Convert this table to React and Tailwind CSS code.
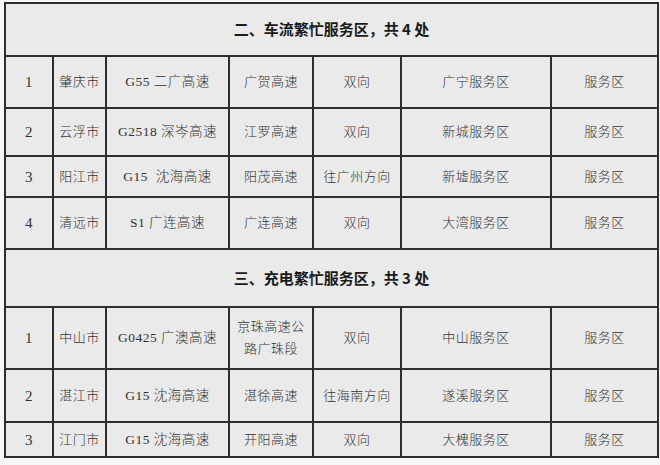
import React from 'react';

const sections = [
  {
    title: '二、车流繁忙服务区，共 4 处',
    h: 'h-[53px]',
    rows: [
      { h: 'h-[52px]', cells: ['1', '肇庆市', 'G55 二广高速', '广贺高速', '双向', '广宁服务区', '服务区'] },
      { h: 'h-[48px]', cells: ['2', '云浮市', 'G2518 深岑高速', '江罗高速', '双向', '新城服务区', '服务区'] },
      { h: 'h-[41px]', cells: ['3', '阳江市', 'G15  沈海高速', '阳茂高速', '往广州方向', '新墟服务区', '服务区'] },
      { h: 'h-[52px]', cells: ['4', '清远市', 'S1 广连高速', '广连高速', '双向', '大湾服务区', '服务区'] },
    ],
  },
  {
    title: '三、充电繁忙服务区，共 3 处',
    h: 'h-[58px]',
    rows: [
      { h: 'h-[62px]', cells: ['1', '中山市', 'G0425 广澳高速', '京珠高速公\n路广珠段', '双向', '中山服务区', '服务区'] },
      { h: 'h-[53px]', cells: ['2', '湛江市', 'G15 沈海高速', '湛徐高速', '往海南方向', '遂溪服务区', '服务区'] },
      { h: 'h-[35px]', cells: ['3', '江门市', 'G15 沈海高速', '开阳高速', '双向', '大槐服务区', '服务区'] },
    ],
  },
];

const cellFont = { fontFamily: '"Liberation Serif", "Noto Sans CJK SC", serif' };

export default function App() {
  return (
    <div className="w-[660px] h-[465px] bg-[#f6f6f6] pt-[2px] pl-[4px] overflow-hidden">
      <table
        className="w-[653px] table-fixed border-collapse bg-[#eaeaea] text-[13px] text-[#333]"
        style={cellFont}
      >
        <colgroup>
          <col className="w-[48px]" />
          <col className="w-[53px]" />
          <col className="w-[123px]" />
          <col className="w-[84px]" />
          <col className="w-[88px]" />
          <col className="w-[150px]" />
          <col className="w-[107px]" />
        </colgroup>
        <tbody>
          {sections.map((sec) => (
            <React.Fragment key={sec.title}>
              <tr className={sec.h}>
                <td
                  colSpan={7}
                  className="border-2 border-[#2e2e2e] text-center text-[15px] font-bold text-[#1a1a1a] font-['Noto_Sans_CJK_SC',sans-serif]"
                >
                  {sec.title}
                </td>
              </tr>
              {sec.rows.map((row, i) => (
                <tr key={i} className={row.h}>
                  {row.cells.map((c, j) => (
                    <td
                      key={j}
                      className={`border-2 border-[#2e2e2e] px-0 text-center font-light tracking-[0.5px] leading-[22px] whitespace-pre ${
                        j === 0 ? 'text-[15px]' : j === 2 ? 'text-[13.5px]' : ''
                      }`}
                    >
                      {c}
                    </td>
                  ))}
                </tr>
              ))}
            </React.Fragment>
          ))}
        </tbody>
      </table>
    </div>
  );
}
